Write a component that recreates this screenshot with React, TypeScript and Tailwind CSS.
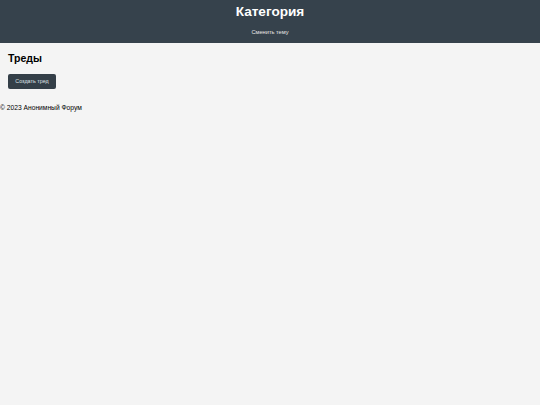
export default function App() {
  return (
    <div className="min-h-[405px] bg-[#f4f4f4] text-black font-['Liberation_Sans',Arial,sans-serif]">
      {/* Header */}
      <header className="bg-[#36424c] text-white text-center h-[43px] pt-[5px]">
        <h1 className="text-[13.6px] font-bold leading-[14px]">Категория</h1>
        <button className="block mx-auto mt-[9px] text-[5.7px] leading-[8px] text-[#e6e6e6]">
          Сменить тему
        </button>
      </header>

      {/* Threads */}
      <main className="px-[8px] pt-[8.5px]">
        <h2 className="text-[10.5px] font-bold leading-[12px]">Треды</h2>
        <button className="block mt-[10.5px] h-[15px] w-[48px] rounded-[2px] bg-[#343f48] text-[5.4px] text-[#dfe2e5]">
          Создать тред
        </button>
      </main>

      {/* Footer */}
      <footer className="mt-[14.5px] text-[6.7px] leading-[8px]">© 2023 Анонимный Форум</footer>
    </div>
  )
}
